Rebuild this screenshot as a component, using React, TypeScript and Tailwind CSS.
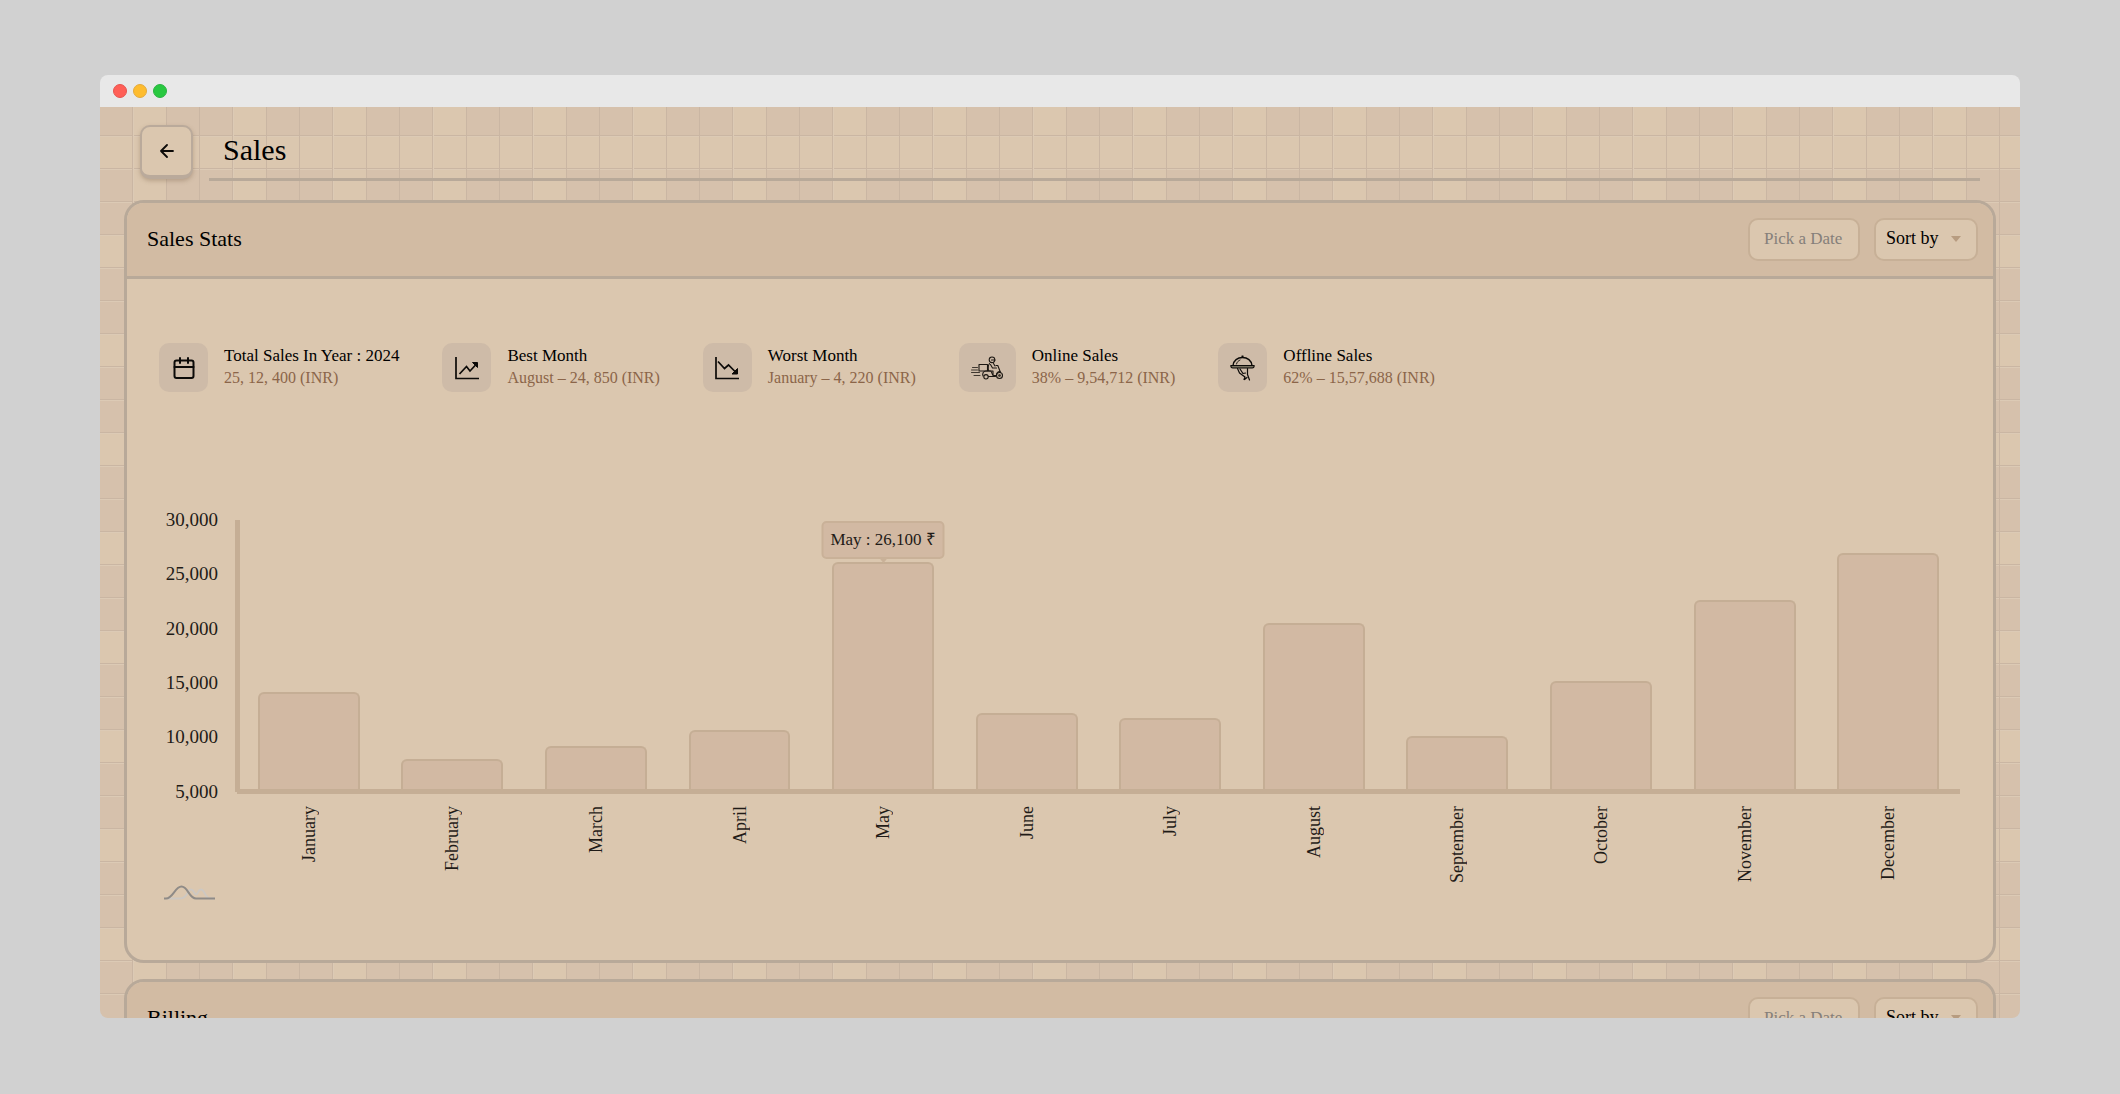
import React from "react";

const FONT = "font-['Liberation_Serif',serif]";

const PLAID =
  "bg-[#d6c1ac] bg-[length:100px_99px] bg-[position:0_0,0_28px,0_0,0_28px] " +
  "bg-[image:linear-gradient(90deg,transparent_32px,#cab6a3_32px_33px,#dccab5_33px_34px,transparent_34px_66px,#cab6a3_66px_67px,transparent_67px_99px,#cab6a3_99px_100px),linear-gradient(180deg,#cab6a3_0_1px,#dccab5_1px_2px,transparent_2px_33px,#cab6a3_33px_34px,#dccab5_34px_35px,transparent_35px_66px,#cab6a3_66px_67px,#dccab5_67px_68px,transparent_68px),linear-gradient(90deg,transparent_33px,#dbc7af_33px_66px,transparent_66px),linear-gradient(180deg,#dbc7af_0_33px,transparent_33px)]";

const AXIS_MIN = 5000;
const AXIS_MAX = 30000;
const TICKS = ["30,000", "25,000", "20,000", "15,000", "10,000", "5,000"];

type Month = { name: string; value: number };

const MONTHS: Month[] = [
  { name: "January", value: 14020 },
  { name: "February", value: 7790 },
  { name: "March", value: 9000 },
  { name: "April", value: 10480 },
  { name: "May", value: 26100 },
  { name: "June", value: 12060 },
  { name: "July", value: 11600 },
  { name: "August", value: 20430 },
  { name: "September", value: 9930 },
  { name: "October", value: 15040 },
  { name: "November", value: 22570 },
  { name: "December", value: 26930 },
];

function CalendarIcon() {
  return (
    <svg width="24" height="24" viewBox="0 0 24 24" fill="none" stroke="#0c0a08" strokeWidth="2" strokeLinecap="round" strokeLinejoin="round" aria-hidden="true">
      <rect x="2.500" y="4.500" width="19" height="17.500" rx="2" />
      <path d="M2.500 11h19M8 2v5M16 2v5" />
    </svg>
  );
}

function TrendUpIcon() {
  return (
    <svg width="26" height="26" viewBox="0 0 26 26" fill="none" stroke="#0c0a08" strokeWidth="1.700" aria-hidden="true">
      <path d="M2 2v21.500h23" />
      <path d="M5.500 19l7-7.500 3.500 4.500 6.500-7" />
      <path d="M18.500 7.500h5v5z" fill="#0c0a08" strokeWidth="1" />
    </svg>
  );
}

function TrendDownIcon() {
  return (
    <svg width="26" height="26" viewBox="0 0 26 26" fill="none" stroke="#0c0a08" strokeWidth="1.700" aria-hidden="true">
      <path d="M2 2v21.500h23" />
      <path d="M4 6.500l6.500 7 4-3.500 7.500 7.500" />
      <path d="M23.500 13.500v5.500h-5.500z" fill="#0c0a08" strokeWidth="1" />
    </svg>
  );
}

function ScooterIcon() {
  return (
    <svg width="33" height="24" viewBox="0 0 33 24" fill="none" stroke="#1c1712" strokeWidth="1.100" strokeLinecap="round" strokeLinejoin="round" aria-hidden="true">
      <path d="M1.500 11.500h5M0.500 14h6M0.500 16.500h8M3 19.500h6" strokeWidth="0.800" />
      <path d="M8 8.500h8.500v6.500H8z" />
      <circle cx="21" cy="3.800" r="2.800" />
      <path d="M20.500 4h3.500" />
      <path d="M18.500 7.500c-1.300 1.500-1.500 4.500-1 7.500h4.500v4" />
      <path d="M19.500 8.500l2 3.500h4M22.500 7.500l1.500 2.500" />
      <path d="M25 9.500h1.800l2.700 7" />
      <path d="M12 20c-1-2.500.5-5 3-5h4.500c1.500 0 1.500 4.500 3 4.500h3c0-2.500 1.500-4 3.500-4" />
      <path d="M17.500 20.500h7" />
      <circle cx="15" cy="20.800" r="2.200" />
      <circle cx="28.500" cy="19.500" r="3" />
      <circle cx="28.500" cy="19.500" r="0.800" />
    </svg>
  );
}

function ClocheIcon() {
  return (
    <svg width="25" height="26" viewBox="0 0 25 26" fill="none" stroke="#0c0a08" strokeWidth="1.400" strokeLinecap="round" strokeLinejoin="round" aria-hidden="true">
      <path d="M12 1.200h1" />
      <path d="M3 10.500C3.500 5.500 7.500 2.500 12.500 2.500S21.500 5.500 22 10.500" />
      <path d="M6.500 9c.5-2 1.800-3.300 3.500-4" strokeWidth="0.900" />
      <path d="M0.800 10.500h23.400c0 1.500-.8 2.500-2 2.500H2.800c-1.200 0-2-1-2-2.500z" fill="#77705f" strokeWidth="1.100" />
      <path d="M7.500 13.500l2 4.500 5.500 4-1 2.500M10 14l3 4.500 2.500-.5M17.500 13.500v6l2 5.500M14.500 24.500l2.500-2" strokeWidth="1.200" />
    </svg>
  );
}

function DistributionIcon() {
  return (
    <svg width="51" height="16" viewBox="0 0 51 16" fill="none" strokeWidth="2" aria-hidden="true">
      <path d="M3 13.500h13c8 0 7-9 11-9 3 0 3 5 5 5s2-5 5-5c4 0 4 9 9 9h4" stroke="#cdc8c2" />
      <path d="M0 13.500h2C9 13.500 11 1.500 17.500 1.500S25 13.500 32 13.500h19" stroke="#8f8b87" />
    </svg>
  );
}

function Filters() {
  return (
    <div className="flex gap-[14px]">
      <input
        type="text"
        aria-label="Pick a Date"
        placeholder="Pick a Date"
        className="h-[43px] w-28 rounded-[10px] border-2 border-[#c7b097] bg-[#dbc7af] pb-px pl-[14px] text-[17px] text-black outline-none placeholder:text-[#857f7a]"
      />
      <div className="relative">
        <select
          aria-label="Sort by"
          className="h-[43px] w-[104px] appearance-none rounded-[10px] border-2 border-[#c7b097] bg-[#dbc7af] pb-0.5 pl-[10px] text-[18px] text-black outline-none"
        >
          <option>Sort by</option>
        </select>
        <svg className="pointer-events-none absolute top-[18px] right-[17px]" width="10" height="6" viewBox="0 0 10 6" aria-hidden="true">
          <path d="M0 0h10L5 6z" fill="#b79c80" />
        </svg>
      </div>
    </div>
  );
}

function Card({ title, children }: { title: string; children?: React.ReactNode }) {
  return (
    <section className="shrink-0 overflow-hidden rounded-[20px] border-3 border-[#b8a999] bg-[#dbc7af]">
      <header className="flex h-[76px] items-center justify-between border-b-3 border-[#b8a999] bg-[#d2bba3] pr-[15px] pl-5">
        <h2 className="pb-0.5 text-[22px] text-black">{title}</h2>
        <Filters />
      </header>
      {children}
    </section>
  );
}

type StatProps = { icon: React.ReactNode; title: string; value: string; wide?: boolean };

function Stat({ icon, title, value, wide }: StatProps) {
  return (
    <div className="flex items-center gap-4">
      <div className={"flex h-[49px] shrink-0 items-center justify-center rounded-[10px] bg-[#cebba8] " + (wide ? "w-[57px]" : "w-[49px]")}>
        {icon}
      </div>
      <div className="pb-0.5 leading-[22px] whitespace-nowrap">
        <p className="text-[17px] leading-[22px] text-black">{title}</p>
        <p className="text-[16px] leading-[22px] text-[#8b6549]">{value}</p>
      </div>
    </div>
  );
}

function Chart() {
  return (
    <div className="flex pr-[33px] pl-9 text-[#1f1b17]">
      <div className="flex h-[272px] w-[77px] flex-col justify-between border-r-5 border-[#c5ae95] pr-[17px] text-right text-[19px]">
        {TICKS.map((t) => (
          <div key={t} className="flex h-0 items-center justify-end">{t}</div>
        ))}
      </div>
      <div className="-ml-[3px] flex-1 text-[18px]">
        <div className="flex h-[274px] border-b-5 border-[#c5ae95]">
          {MONTHS.map((m) => (
            <div key={m.name} className="flex flex-1 items-end justify-center">
              <div
                className="relative w-[71%] rounded-t-md border-2 border-b-0 border-[#c5ae95] bg-[#d2b9a3]"
                style={{ height: ((m.value - AXIS_MIN) / (AXIS_MAX - AXIS_MIN)) * 100 + "%" }}
              >
                {m.name === "May" && (
                  <div className="absolute bottom-full left-1/2 mb-[5px] flex h-[38px] w-[123px] -translate-x-1/2 items-center justify-center rounded-[5px] border-2 border-[#c9b198] bg-[#d2b9a3] text-[17px] whitespace-nowrap">
                    May : 26,100 ₹
                    <svg className="absolute top-full left-1/2 -translate-x-1/2" width="10" height="6" viewBox="0 0 10 6" aria-hidden="true">
                      <path d="M0 0h10L5 6z" fill="#c9b198" />
                    </svg>
                  </div>
                )}
              </div>
            </div>
          ))}
        </div>
        <div className="flex h-[91px] pt-3">
          {MONTHS.map((m) => (
            <div key={m.name} className="flex flex-1 items-start justify-center">
              <span className="rotate-180 leading-5 [writing-mode:vertical-rl]">{m.name}</span>
            </div>
          ))}
        </div>
      </div>
    </div>
  );
}

export default function App() {
  return (
    <div className={"h-screen bg-[#d1d1d1] px-[100px] pt-[75px] pb-[76px] " + FONT}>
      <div className="flex h-full flex-col overflow-hidden rounded-lg">
        <div className="flex h-8 shrink-0 items-center gap-1.5 bg-[#e8e8e8] pl-[13px]">
          <span className="size-[14px] rounded-full border border-[#e6544f] bg-[#ff5f57]" />
          <span className="size-[14px] rounded-full border border-[#e3aa3c] bg-[#febc2e]" />
          <span className="size-[14px] rounded-full border border-[#2bb241] bg-[#28c840]" />
        </div>
        <main className={"flex min-h-0 flex-1 flex-col overflow-hidden px-6 pt-[18px] " + PLAID}>
          <header className="flex shrink-0 px-4">
            <button
              type="button"
              aria-label="Back"
              className="flex h-[54px] w-[53px] items-center justify-center rounded-[10px] border-2 border-b-4 border-[#baaa9b] bg-[#dbc7af] shadow-[0_2px_4px_rgba(120,95,70,0.35)]"
            >
              <svg width="14" height="14" viewBox="0 0 14 14" fill="none" stroke="#0c0a08" strokeWidth="1.800" strokeLinecap="round" strokeLinejoin="round" aria-hidden="true">
                <path d="M13 7H1M7 1L1 7l6 6" />
              </svg>
            </button>
            <div className="ml-4 flex h-14 flex-1 items-center border-b-3 border-[#b8a999] pb-1 pl-[14px]">
              <h1 className="text-[30px] text-black">Sales</h1>
            </div>
          </header>
          <div className="mt-[19px] flex flex-col gap-4">
            <Card title="Sales Stats">
              <div className="flex flex-wrap gap-x-[43px] gap-y-4 px-8 pt-16">
                <Stat icon={<CalendarIcon />} title="Total Sales In Year : 2024" value="25, 12, 400 (INR)" />
                <Stat icon={<TrendUpIcon />} title="Best Month" value="August – 24, 850 (INR)" />
                <Stat icon={<TrendDownIcon />} title="Worst Month" value="January – 4, 220 (INR)" />
                <Stat icon={<ScooterIcon />} title="Online Sales" value="38% – 9,54,712 (INR)" wide />
                <Stat icon={<ClocheIcon />} title="Offline Sales" value="62% – 15,57,688 (INR)" />
              </div>
              <div className="pt-32 pb-[59px]">
                <Chart />
                <div className="pl-[37px]">
                  <DistributionIcon />
                </div>
              </div>
            </Card>
            <Card title="Billing" />
          </div>
        </main>
      </div>
    </div>
  );
}
